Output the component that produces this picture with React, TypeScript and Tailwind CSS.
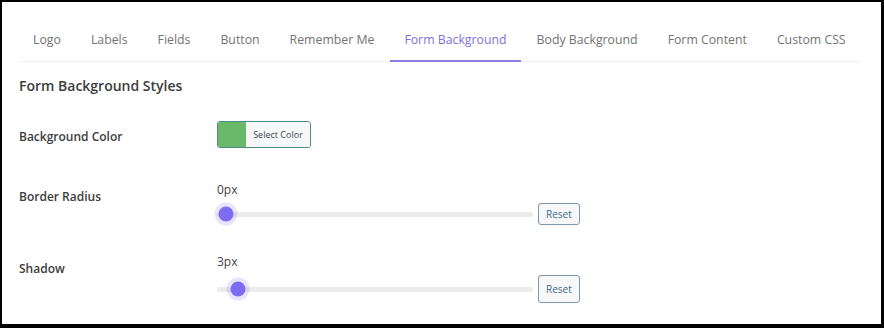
const tabs = [
  'Logo',
  'Labels',
  'Fields',
  'Button',
  'Remember Me',
  'Form Background',
  'Body Background',
  'Form Content',
  'Custom CSS',
];

function Slider({ value, pos, tall }: { value: string; pos: number; tall?: boolean }) {
  return (
    <div className="flex flex-col">
      <span className="text-[12px] leading-none text-[#444]">{value}</span>
      <div className="mt-[7px] flex items-center">
        <div className="relative h-[5px] w-[316px] rounded-full bg-[#ececec]">
          <div
            className="absolute top-1/2 h-[15px] w-[15px] -translate-x-1/2 -translate-y-1/2 rounded-full bg-[#7c6cf2] shadow-[0_0_0_4px_rgba(124,108,242,0.18)]"
            style={{ left: pos }}
          />
        </div>
        <button
          className={
            tall
              ? 'ml-[5px] rounded-[3px] border border-[#7c98ad] bg-[#f6f8fa] px-[7px] py-[8px] text-[10px] leading-none text-[#3f6a88]'
              : 'ml-[5px] rounded-[3px] border border-[#7c98ad] bg-[#f6f8fa] px-[7px] py-[5px] text-[10px] leading-none text-[#3f6a88]'
          }
        >
          Reset
        </button>
      </div>
    </div>
  );
}

export default function App() {
  return (
    <div className="h-[328px] w-[884px] bg-black pb-[4px] pl-[2px] pr-[3px] pt-[2px] font-['Open_Sans',sans-serif]">
      <div className="h-full w-full bg-white px-[17px] pt-[17px]">
        <nav className="flex w-[841px] gap-[2px] border-b border-[#f0f0f2]">
          {tabs.map((t) => (
            <div
              key={t}
              className={
                t === 'Form Background'
                  ? '-mb-px shrink-0 whitespace-nowrap border-b-2 border-[#8a7fe0] px-[14px] pb-[14px] pt-[15px] text-[12.3px] leading-none text-[#7f72dc]'
                  : '-mb-px shrink-0 whitespace-nowrap border-b-2 border-transparent px-[14px] pb-[14px] pt-[15px] text-[12.3px] leading-none text-[#737373]'
              }
            >
              {t}
            </div>
          ))}
        </nav>
        <h2 className="mt-[17px] text-[14px] font-semibold leading-none text-[#3d3d3d]">Form Background Styles</h2>
        <div className="mt-[28px] flex items-center">
          <span className="w-[198px] pt-[4px] text-[12px] font-semibold text-[#3d3d3d]">Background Color</span>
          <div className="flex h-[27px] w-[94px] overflow-hidden rounded-[3px] border border-[#4f8a8b]">
            <span className="w-[28px] bg-[#6ab96a]" />
            <span className="flex flex-1 items-center justify-center bg-[#f6f7f7] text-[9px] text-[#3d4a55]">
              Select Color
            </span>
          </div>
        </div>
        <div className="mt-[36px] flex">
          <span className="w-[198px] pt-[4px] text-[12px] font-semibold text-[#3d3d3d]">Border Radius</span>
          <Slider value="0px" pos={9} />
        </div>
        <div className="mt-[31px] flex">
          <span className="w-[198px] pt-[4px] text-[12px] font-semibold text-[#3d3d3d]">Shadow</span>
          <Slider value="3px" pos={21} tall />
        </div>
      </div>
    </div>
  );
}
